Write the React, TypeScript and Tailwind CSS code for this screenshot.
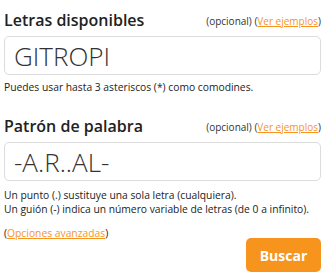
export default function App() {
  return (
    <div className="w-[325px] h-[279px] bg-white px-[4px] pt-[10px] text-[#222] font-['Open_Sans',sans-serif]">
      <div className="flex items-end justify-between">
        <h2 className="text-[16px] font-semibold leading-[20px]">Letras disponibles</h2>
        <span className="text-[10px] leading-[14px] text-[#333] mb-[2px]">
          (opcional) (<a className="text-[#f7941d] underline">Ver ejemplos</a>)
        </span>
      </div>
      <div className="mt-[6px] h-[39px] rounded-[5px] border border-[#dcdcdc] flex items-center px-[9px]">
        <span className="text-[26px] font-light text-[#333] leading-none">GITROPI</span>
      </div>
      <p className="mt-[6px] text-[10.3px] leading-[13px]">Puedes usar hasta 3 asteriscos (*) como comodines.</p>

      <div className="mt-[22px] flex items-end justify-between">
        <h2 className="text-[16px] font-semibold leading-[20px]">Patrón de palabra</h2>
        <span className="text-[10px] leading-[14px] text-[#333] mb-[2px]">
          (opcional) (<a className="text-[#f7941d] underline">Ver ejemplos</a>)
        </span>
      </div>
      <div className="mt-[6px] h-[39px] rounded-[5px] border border-[#dcdcdc] flex items-center px-[9px]">
        <span className="text-[26px] font-light text-[#333] leading-none">-A.R..AL-</span>
      </div>
      <p className="mt-[7px] text-[10.3px] leading-[14px]">Un punto (.) sustituye una sola letra (cualquiera).</p>
      <p className="text-[10.3px] leading-[14px]">Un guión (-) indica un número variable de letras (de 0 a infinito).</p>
      <p className="mt-[10px] text-[10.3px] leading-[14px]">
        (<a className="text-[#f7941d] underline">Opciones avanzadas</a>)
      </p>
      <div className="flex justify-end mt-[-2px]">
        <button className="w-[75px] h-[34px] rounded-[5px] bg-[#f7941d] text-white text-[14px] font-bold">Buscar</button>
      </div>
    </div>
  );
}
